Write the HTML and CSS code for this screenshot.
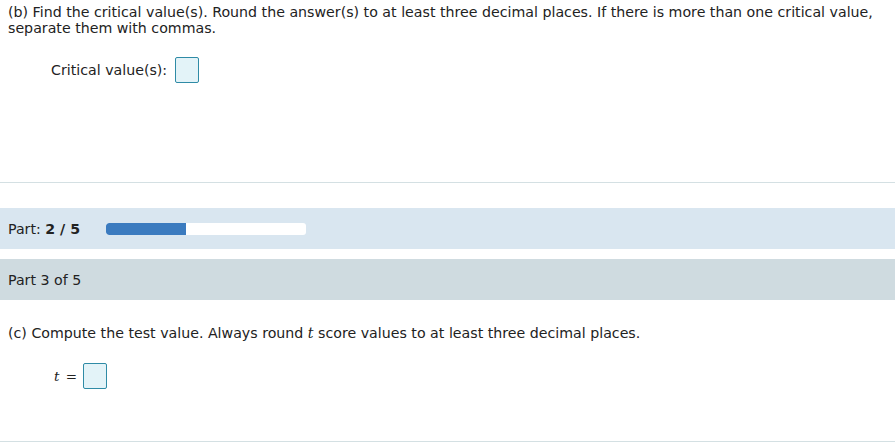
FILE: index.html
```html
<!DOCTYPE html>
<html>
<head>
<meta charset="utf-8">
<link rel="stylesheet" href="styles.css">
</head>
<body>
<section class="part part-b">
  <p class="question">(b) Find the critical value(s). Round the answer(s) to at least three decimal places. If there is more than one critical value, separate them with commas.</p>
  <div class="answer-row critical">
    <span class="label">Critical value(s):</span>
    <span class="input-box"></span>
  </div>
</section>
<hr class="divider">
<div class="progress-bar-row">
  <span class="part-label">Part: <b>2 / 5</b></span>
  <div class="progress"><div class="progress-fill" style="width:40%"></div></div>
</div>
<div class="part-header">Part 3 of 5</div>
<section class="part part-c">
  <p class="question">(c) Compute the test value. Always round <i class="math">t</i> score values to at least three decimal places.</p>
  <div class="answer-row tval">
    <span class="math-label"><i class="math">t</i> <span class="eq">=</span></span>
    <span class="input-box"></span>
  </div>
</section>
<hr class="divider bottom">
</body>
</html>
```

FILE: styles.css
```css
html, body {
  margin: 0;
  padding: 0;
  background: #ffffff;
}
body {
  font-family: "DejaVu Sans", Verdana, sans-serif;
  font-size: 14.2px;
  color: #222;
  width: 895px;
}
.question {
  margin: 0;
  padding: 0 8px;
  line-height: 16px;
}
.part-b {
  padding-top: 4px;
  height: 178px;
}
.answer-row {
  display: flex;
  align-items: center;
}
.critical {
  margin-top: 21px;
  padding-left: 51px;
}
.critical .label {
  margin-right: 8px;
}
.input-box {
  display: inline-block;
  width: 22px;
  height: 24px;
  border: 1px solid #2f8ba6;
  border-radius: 2px;
  background: #e3f3f8;
}
.divider {
  margin: 0;
  border: 0;
  border-top: 1px solid #d4e0e3;
  height: 0;
}
.progress-bar-row {
  margin-top: 25px;
  height: 41px;
  background: #d9e6f0;
  display: flex;
  align-items: center;
  padding-left: 8px;
}
.part-label {
  width: 98px;
}
.part-label b {
  font-weight: bold;
}
.progress {
  width: 200px;
  height: 12px;
  background: #ffffff;
  border-radius: 3px;
  overflow: hidden;
}
.progress-fill {
  height: 100%;
  background: #3b7bbf;
  border-radius: 3px 0 0 3px;
}
.part-header {
  margin-top: 10px;
  height: 41px;
  background: #cfdbe0;
  display: flex;
  align-items: center;
  padding-left: 8px;
}
.part-c {
  padding-top: 25px;
  height: 116px;
}
.math {
  font-family: "DejaVu Serif", "Times New Roman", serif;
  font-style: italic;
}
.tval {
  margin-top: 22px;
  padding-left: 54px;
}
.math-label {
  margin-right: 6px;
  font-family: "DejaVu Serif", serif;
  font-size: 13.5px;
}
.eq {
  font-style: normal;
  margin-left: 2px;
}
.bottom {
  border-top-color: #d4e0e3;
}
```
